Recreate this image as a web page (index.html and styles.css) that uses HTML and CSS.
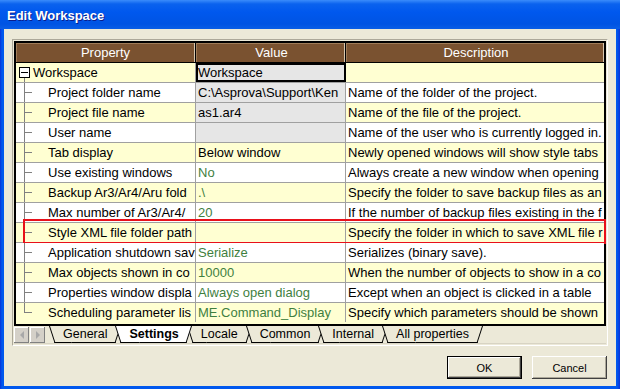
FILE: index.html
```html
<!DOCTYPE html>
<html lang="en">
<head>
<meta charset="UTF-8">
<link rel="stylesheet" href="styles.css">
</head>
<body>
<div class="window">
    <!-- Title bar -->
    <div class="titlebar">Edit Workspace</div>

    <div class="client">
        <div class="panel">
            <div class="grid">
                <div class="row header">
                    <div class="cell prop">Property</div>
                    <div class="cell value">Value</div>
                    <div class="cell desc">Description</div>
                </div>

                <div class="row yellow">
                    <div class="cell prop"><span class="tree root"><span class="minus"></span></span>Workspace</div>
                    <div class="cell value selected">Workspace</div>
                    <div class="cell desc"></div>
                </div>
                <div class="row white">
                    <div class="cell prop"><span class="tree"></span>Project folder name</div>
                    <div class="cell value readonly">C:\Asprova\Support\Ken</div>
                    <div class="cell desc">Name of the folder of the project.</div>
                </div>
                <div class="row yellow">
                    <div class="cell prop"><span class="tree"></span>Project file name</div>
                    <div class="cell value readonly">as1.ar4</div>
                    <div class="cell desc">Name of the file of the project.</div>
                </div>
                <div class="row white">
                    <div class="cell prop"><span class="tree"></span>User name</div>
                    <div class="cell value readonly"></div>
                    <div class="cell desc">Name of the user who is currently logged in.</div>
                </div>
                <div class="row yellow">
                    <div class="cell prop"><span class="tree"></span>Tab display</div>
                    <div class="cell value">Below window</div>
                    <div class="cell desc">Newly opened windows will show style tabs</div>
                </div>
                <div class="row white">
                    <div class="cell prop"><span class="tree"></span>Use existing windows</div>
                    <div class="cell value default">No</div>
                    <div class="cell desc">Always create a new window when opening</div>
                </div>
                <div class="row yellow">
                    <div class="cell prop"><span class="tree"></span>Backup Ar3/Ar4/Aru fold</div>
                    <div class="cell value default">.\</div>
                    <div class="cell desc">Specify the folder to save backup files as an</div>
                </div>
                <div class="row white">
                    <div class="cell prop"><span class="tree"></span>Max number of Ar3/Ar4/</div>
                    <div class="cell value default">20</div>
                    <div class="cell desc">If the number of backup files existing in the f</div>
                </div>
                <div class="row yellow marked">
                    <div class="cell prop"><span class="tree"></span>Style XML file folder path</div>
                    <div class="cell value"></div>
                    <div class="cell desc">Specify the folder in which to save XML file r</div>
                </div>
                <div class="row white">
                    <div class="cell prop"><span class="tree"></span>Application shutdown sav</div>
                    <div class="cell value default">Serialize</div>
                    <div class="cell desc">Serializes (binary save).</div>
                </div>
                <div class="row yellow">
                    <div class="cell prop"><span class="tree"></span>Max objects shown in co</div>
                    <div class="cell value default">10000</div>
                    <div class="cell desc">When the number of objects to show in a co</div>
                </div>
                <div class="row white">
                    <div class="cell prop"><span class="tree"></span>Properties window displa</div>
                    <div class="cell value default">Always open dialog</div>
                    <div class="cell desc">Except when an object is clicked in a table</div>
                </div>
                <div class="row yellow">
                    <div class="cell prop"><span class="tree last"></span>Scheduling parameter lis</div>
                    <div class="cell value default">ME.Command_Display</div>
                    <div class="cell desc">Specify which parameters should be shown</div>
                </div>
            </div>

            <!-- Sheet tabs -->
            <div class="tabbar">
                <span class="scroll-btn left"></span>
                <span class="scroll-btn right"></span>
                <div class="tabs">
                    <span class="tab">General</span>
                    <span class="tab active">Settings</span>
                    <span class="tab">Locale</span>
                    <span class="tab">Common</span>
                    <span class="tab">Internal</span>
                    <span class="tab">All properties</span>
                </div>
            </div>
        </div>

        <div class="buttons">
            <button class="btn default-btn">OK</button>
            <button class="btn">Cancel</button>
        </div>
    </div>
</div>
</body>
</html>
```

FILE: styles.css
```css
body, html {
    margin: 0;
    padding: 0;
    font-family: "Liberation Sans", Arial, sans-serif;
}

.window {
    width: 620px;
    height: 389px;
    box-sizing: border-box;
    display: flex;
    flex-direction: column;
    background: linear-gradient(to right, #0831d9 0, #0058ee 2px, #0058ee 617px, #0831d9 620px);
}

.titlebar {
    height: 29px;
    line-height: 31px;
    padding-left: 7px;
    font-size: 13px;
    font-weight: bold;
    color: #fff;
    text-shadow: 1px 1px 0 #0a1e8c;
    background: linear-gradient(#3a8cfb 0, #0a62ee 4px, #0058ee 12px, #0054e3 24px, #0a5ee6 29px);
}

.client {
    flex: 1;
    margin: 0 4px 3px;
    padding: 10px 8px 0;
    background-color: #ece9d8;
}

/* Sunken frame around grid and tabs */
.panel {
    border: 1px solid;
    border-color: #aca899 #fff #fff #aca899;
    padding: 1px;
}

.grid {
    border: 2px solid #000;
    font-size: 13px;
}

.row {
    display: flex;
    height: 20px;
    box-sizing: border-box;
    border-bottom: 1px solid #a0a0a0;
    position: relative;
}

.row:last-child {
    border-bottom: none;
    height: 21px;
}

.cell {
    box-sizing: border-box;
    height: 19px;
    line-height: 19px;
    white-space: nowrap;
    overflow: hidden;
    border-right: 1px solid #a0a0a0;
}

.prop {
    width: 180px;
}

.value {
    width: 150px;
    padding-left: 2px;
}

.desc {
    flex: 1;
    padding-left: 2px;
    border-right: none;
}

.yellow {
    background-color: #ffffd2;
}

.white {
    background-color: #fff;
}

.readonly {
    background-color: #e6e6e6;
}

.default {
    color: #3f7f3f;
}

.selected {
    background-color: #e6e6e6;
    border: 2px solid #000;
    line-height: 15px;
    padding-left: 0;
}

/* Header */
.header {
    border-bottom: 1px solid #000;
}

.header .cell {
    background-color: #7a5230;
    color: #fff;
    text-align: center;
    border-right: 1px solid #000;
    box-shadow: inset -1px 0 0 #d8c8b0, inset 1px 1px 0 #a07c58;
}

.header .desc {
    border-right: none;
}

/* Tree lines */
.tree {
    display: inline-block;
    width: 32px;
    height: 19px;
    vertical-align: top;
    position: relative;
    background:
        linear-gradient(#808080, #808080) 8px 0 / 1px 100% no-repeat,
        linear-gradient(#808080, #808080) 8px 9px / 8px 1px no-repeat;
}

.tree.last {
    background:
        linear-gradient(#808080, #808080) 8px 0 / 1px 10px no-repeat,
        linear-gradient(#808080, #808080) 8px 9px / 8px 1px no-repeat;
}

.tree.root {
    width: 17px;
    background: linear-gradient(#808080, #808080) 8px 14px / 1px 5px no-repeat;
}

.minus {
    position: absolute;
    left: 3px;
    top: 4px;
    width: 9px;
    height: 9px;
    border: 1px solid #000;
    background: #fff linear-gradient(#000, #000) center / 7px 1px no-repeat;
}

/* Red annotation box */
.marked::after {
    content: "";
    position: absolute;
    left: 7px;
    right: -2px;
    top: -4px;
    bottom: -2px;
    border: 2px solid #e8101a;
}

/* Tabs */
.tabbar {
    display: flex;
    height: 18px;
    font-size: 12.5px;
    border-bottom: 1px solid #d8d4c4;
    box-sizing: border-box;
}

.scroll-btn {
    width: 15px;
    height: 16px;
    margin-top: 1px;
    margin-right: 1px;
    background-color: #d4d0c8;
    box-shadow: inset -1px -1px 0 #808080, inset 1px 1px 0 #fff;
    position: relative;
}

.scroll-btn::after {
    content: "";
    position: absolute;
    top: 4px;
    border: 4px solid transparent;
}

.scroll-btn.left::after {
    left: 2px;
    border-right-color: #a8a8a8;
}

.scroll-btn.right::after {
    left: 6px;
    border-left-color: #a8a8a8;
}

.tabs {
    display: flex;
    margin-left: 3px;
}

.tab {
    position: relative;
    z-index: 1;
    height: 17px;
    line-height: 16px;
    padding: 0 14px 0 14px;
    margin-right: -6px;
    color: #000;
}

.tab::before,
.tab::after {
    content: "";
    position: absolute;
    top: 0;
    bottom: 0;
    width: 60%;
    z-index: -1;
    background-color: #ece9d8;
    border-bottom: 1px solid #000;
}

.tab::before {
    left: 0;
    border-left: 1px solid #000;
    transform: skewX(18deg);
    transform-origin: 0 0;
}

.tab::after {
    right: 0;
    border-right: 1px solid #000;
    transform: skewX(-18deg);
    transform-origin: 100% 0;
}

.tab.active {
    z-index: 5;
    font-weight: bold;
}

.tab.active::before,
.tab.active::after {
    background-color: #fff;
}

/* Dialog buttons */
.buttons {
    display: flex;
    justify-content: flex-end;
    gap: 10px;
    margin-top: 10px;
    padding-right: 1px;
}

.btn {
    width: 75px;
    height: 23px;
    padding: 0;
    font-family: "Liberation Sans", Arial, sans-serif;
    font-size: 11px;
    color: #000;
    background-color: #ece9d8;
    border: none;
    box-shadow: inset -1px -1px 0 #404040, inset 1px 1px 0 #fff, inset -2px -2px 0 #aca899;
}

.default-btn {
    border: 1px solid #000;
}
```
